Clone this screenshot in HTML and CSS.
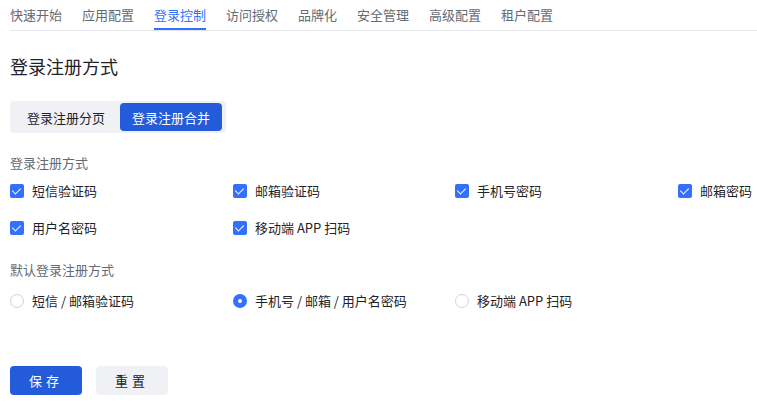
FILE: index.html
```html
<!DOCTYPE html>
<html lang="zh-CN">
<head>
  <meta charset="UTF-8">
  <title>登录控制</title>
  <link rel="stylesheet" href="styles.css">
</head>
<body>

  <nav class="tabs">
    <a class="tab">快速开始</a>
    <a class="tab">应用配置</a>
    <a class="tab active">登录控制</a>
    <a class="tab">访问授权</a>
    <a class="tab">品牌化</a>
    <a class="tab">安全管理</a>
    <a class="tab">高级配置</a>
    <a class="tab">租户配置</a>
  </nav>

  <div class="content">
    <h2 class="title">登录注册方式</h2>

    <div class="segment">
      <button class="seg-btn">登录注册分页</button>
      <button class="seg-btn active">登录注册合并</button>
    </div>

    <div class="field-label first">登录注册方式</div>
    <div class="options">
      <label class="check"><span class="box"></span>短信验证码</label>
      <label class="check"><span class="box"></span>邮箱验证码</label>
      <label class="check"><span class="box"></span>手机号密码</label>
      <label class="check"><span class="box"></span>邮箱密码</label>
      <label class="check"><span class="box"></span>用户名密码</label>
      <label class="check"><span class="box"></span>移动端 APP 扫码</label>
    </div>

    <div class="field-label">默认登录注册方式</div>
    <div class="options radios">
      <label class="radio"><span class="dot"></span>短信 / 邮箱验证码</label>
      <label class="radio on"><span class="dot"></span>手机号 / 邮箱 / 用户名密码</label>
      <label class="radio"><span class="dot"></span>移动端 APP 扫码</label>
    </div>

    <div class="actions">
      <button class="btn primary">保存</button>
      <button class="btn">重置</button>
    </div>
  </div>

</body>
</html>
```
FILE: styles.css
```css
body {
  margin: 0;
  padding-left: 10px;
  font-family: "Noto Sans CJK SC", "Noto Sans", sans-serif;
  font-size: 13px;
  color: #1f2329;
  overflow: hidden;
}

.tabs {
  display: flex;
  gap: 20px;
  height: 30px;
  border-bottom: 1px solid #e5e6eb;
}

.tab {
  line-height: 29px;
  color: #646a73;
  border-bottom: 2px solid transparent;
  cursor: pointer;
}

.tab.active {
  color: #3370ff;
  border-bottom-color: #3370ff;
}

.title {
  margin: 22px 0 0;
  font-size: 18px;
  font-weight: normal;
  line-height: 26px;
}

.segment {
  display: inline-flex;
  margin-top: 22px;
  padding: 2px 4px 2px 2px;
  background: #f0f1f5;
  border-radius: 4px;
}

.seg-btn {
  height: 28px;
  padding: 0 15px;
  border: none;
  border-radius: 4px;
  background: transparent;
  font: inherit;
  color: #1f2329;
}

.seg-btn.active {
  padding: 0 12px;
  background: #245bdb;
  color: #fff;
}

.field-label {
  margin-top: 22px;
  line-height: 20px;
  color: #646a73;
}

.field-label.first {
  margin-top: 20px;
}

.options {
  display: grid;
  grid-template-columns: 223px 222px 223px 1fr;
  row-gap: 17px;
  margin-top: 8px;
}

.options.radios {
  margin-top: 11px;
}

.check,
.radio {
  display: flex;
  align-items: center;
  gap: 8px;
  line-height: 20px;
  white-space: nowrap;
}

.box {
  position: relative;
  width: 14px;
  height: 14px;
  border-radius: 2px;
  background: #3370ff;
}

.box::after {
  content: "";
  position: absolute;
  left: 4px;
  top: 2px;
  width: 4px;
  height: 7px;
  border: solid #fff;
  border-width: 0 1.5px 1.5px 0;
  transform: rotate(45deg);
}

.dot {
  position: relative;
  width: 14px;
  height: 14px;
  box-sizing: border-box;
  border: 1px solid #d0d3d6;
  border-radius: 50%;
}

.radio.on .dot {
  border: none;
  background: #3370ff;
}

.radio.on .dot::after {
  content: "";
  position: absolute;
  left: 5px;
  top: 5px;
  width: 4px;
  height: 4px;
  border-radius: 50%;
  background: #fff;
}

.actions {
  display: flex;
  gap: 14px;
  margin-top: 55px;
}

.btn {
  width: 72px;
  height: 29px;
  border: none;
  border-radius: 4px;
  background: #f0f1f5;
  font: inherit;
  letter-spacing: 4px;
  color: #1f2329;
}

.btn.primary {
  background: #245bdb;
  color: #fff;
}
```
